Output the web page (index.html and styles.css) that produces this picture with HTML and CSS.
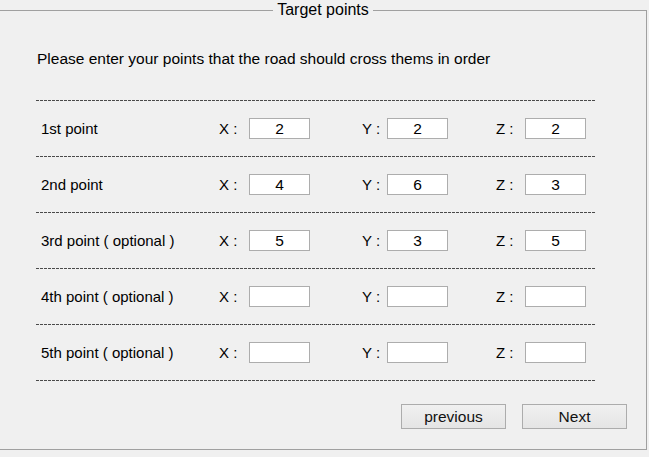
FILE: index.html
```html
<!DOCTYPE html>
<html lang="en">
<head>
    <meta charset="UTF-8">
    <title>Target points</title>
    <link rel="stylesheet" href="styles.css">
</head>
<body>
    <fieldset class="panel">
        <legend>Target points</legend>

        <p class="intro">Please enter your points that the road should cross thems in order</p>

        <div class="rows">
            <div class="row">
                <span class="name">1st point</span>
                <label class="axis axis-x">X :</label><input class="coord" type="text" value="2">
                <label class="axis axis-y">Y :</label><input class="coord" type="text" value="2">
                <label class="axis axis-z">Z :</label><input class="coord" type="text" value="2">
            </div>
            <div class="row">
                <span class="name">2nd point</span>
                <label class="axis axis-x">X :</label><input class="coord" type="text" value="4">
                <label class="axis axis-y">Y :</label><input class="coord" type="text" value="6">
                <label class="axis axis-z">Z :</label><input class="coord" type="text" value="3">
            </div>
            <div class="row">
                <span class="name">3rd point ( optional )</span>
                <label class="axis axis-x">X :</label><input class="coord" type="text" value="5">
                <label class="axis axis-y">Y :</label><input class="coord" type="text" value="3">
                <label class="axis axis-z">Z :</label><input class="coord" type="text" value="5">
            </div>
            <div class="row">
                <span class="name">4th point ( optional )</span>
                <label class="axis axis-x">X :</label><input class="coord" type="text">
                <label class="axis axis-y">Y :</label><input class="coord" type="text">
                <label class="axis axis-z">Z :</label><input class="coord" type="text">
            </div>
            <div class="row">
                <span class="name">5th point ( optional )</span>
                <label class="axis axis-x">X :</label><input class="coord" type="text">
                <label class="axis axis-y">Y :</label><input class="coord" type="text">
                <label class="axis axis-z">Z :</label><input class="coord" type="text">
            </div>
        </div>

        <div class="buttons">
            <button type="button" class="btn">previous</button>
            <button type="button" class="btn">Next</button>
        </div>
    </fieldset>
</body>
</html>
```

FILE: styles.css
```css
body {
    margin: 0;
    background-color: #f0f0f0;
    font-family: "Liberation Sans", Arial, sans-serif;
    font-size: 15px;
    color: #000;
}

/* Group box with the title sitting on the top edge */
.panel {
    box-sizing: border-box;
    width: 647px;
    height: 450px;
    margin: 0;
    padding: 0;
    border: 1px solid #a0a0a0;
    border-left: none;
}

.panel legend {
    margin: 0 auto;
    padding: 0 4px;
    font-size: 16px;
    line-height: 20px;
}

.intro {
    margin: 30px 0 0 37px;
    font-size: 15.5px;
    line-height: 18px;
}

/* Dashed separators between the point rows */
.rows {
    width: 560px;
    margin: 32px 0 0 36px;
    padding-bottom: 1px;
    background: repeating-linear-gradient(90deg, #4a4a4a 0 3px, transparent 3px 4px) bottom / 100% 1px no-repeat;
}

.row {
    display: flex;
    align-items: center;
    height: 55px;
    padding: 1px 0 0 5px;
    background: repeating-linear-gradient(90deg, #4a4a4a 0 3px, transparent 3px 4px) top / 100% 1px no-repeat;
}

.name {
    width: 178px;
}

.axis {
    flex: none;
}

.axis-x {
    width: 30px;
}

.axis-y {
    width: 25px;
    margin-left: 52px;
}

.axis-z {
    width: 29px;
    margin-left: 48px;
}

.coord {
    box-sizing: border-box;
    width: 61px;
    height: 21px;
    margin: 0;
    padding: 0;
    border: 1px solid #adadad;
    background: #fff;
    font-family: inherit;
    font-size: 15.5px;
    text-align: center;
    color: #000;
}

.buttons {
    display: flex;
    justify-content: flex-end;
    gap: 16px;
    margin-top: 23px;
    padding-right: 19px;
}

.btn {
    width: 105px;
    height: 25px;
    padding: 0;
    border: 1px solid #acacac;
    background: linear-gradient(#f0f0f0, #e5e5e5);
    font-family: inherit;
    font-size: 15.5px;
    color: #111;
}
```
